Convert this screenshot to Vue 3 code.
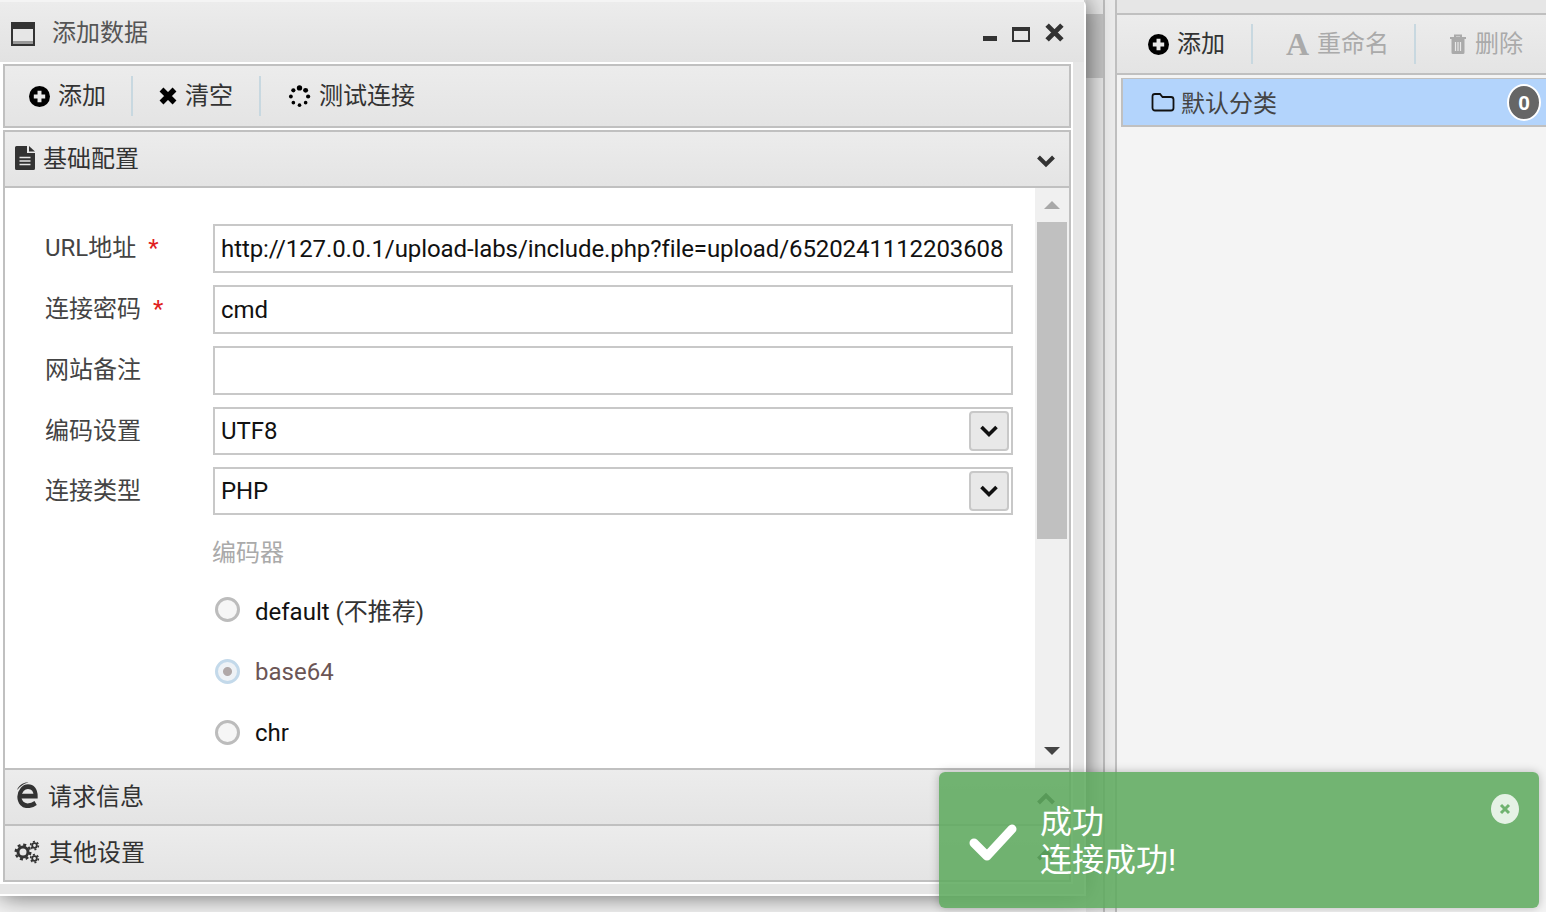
<script setup>
const fields = [
  { label: 'URL地址', required: true, value: 'http://127.0.0.1/upload-labs/include.php?file=upload/6520241112203608' },
  { label: '连接密码', required: true, value: 'cmd' },
  { label: '网站备注', value: '' },
  { label: '编码设置', value: 'UTF8', select: true },
  { label: '连接类型', value: 'PHP', select: true },
]
const encoders = [
  { name: 'default', note: ' (不推荐)' },
  { name: 'base64', checked: true },
  { name: 'chr' },
]
const spinnerDots = [
  [12, 3, 2.8], [18.4, 5.6, 2.6], [21, 12, 2.2], [18.4, 18.4, 1.9],
  [12, 21, 1.9], [5.6, 18.4, 1.9], [3, 12, 2], [5.6, 5.6, 2.2],
]
</script>

<template>
  <div class="desk">
    <div class="back-left">
      <div class="back-scroll"><div class="back-thumb"></div></div>
    </div>
    <div class="back-gap"></div>
    <div class="back-right">
      <div class="right-top"></div>
      <div class="right-bar">
        <div class="tool tool-first">
          <svg class="ic-plus" viewBox="0 0 24 24"><circle cx="12" cy="12" r="12" fill="#000" /><path d="M12 5.500v13M5.500 12h13" stroke="#e8e8e8" stroke-width="4.500" /></svg>
          <span class="tool-label">添加</span>
        </div>
        <div class="tool tool-off tool-rename">
          <span class="glyph-a">A</span>
          <span class="tool-label">重命名</span>
        </div>
        <div class="tool tool-off tool-del">
          <svg class="ic-trash" viewBox="0 0 18 22">
            <path d="M1 5h16M6 5V2.500h6V5" fill="none" stroke="#aaa" stroke-width="2" />
            <path d="M2.500 6h13v13.500a1.500 1.500 0 0 1-1.500 1.500H4a1.500 1.500 0 0 1-1.500-1.500z" fill="#aaa" />
            <path d="M6.500 9v9M9 9v9M11.500 9v9" stroke="#e8e8e8" stroke-width="1.200" />
          </svg>
          <span class="tool-label">删除</span>
        </div>
      </div>
      <div class="cat-item">
        <svg class="ic-folder" viewBox="0 0 24 20"><path d="M4 2h5l2.500 3H20a2.500 2.500 0 0 1 2.500 2.500V16a2.500 2.500 0 0 1-2.500 2.500H4A2.500 2.500 0 0 1 1.500 16V4.500A2.500 2.500 0 0 1 4 2z" fill="none" stroke="#111" stroke-width="1.800" /></svg>
        <span class="cat-name">默认分类</span>
        <span class="badge">0</span>
      </div>
    </div>

    <!-- 浮动窗口 -->
    <div class="win">
      <div class="win-head">
        <svg class="ic-win" viewBox="0 0 24 24">
          <rect x="0" y="0" width="24" height="24" fill="#333" />
          <rect x="2" y="7" width="20" height="15" fill="#e6e6e6" />
          <rect x="2" y="19" width="20" height="3" fill="#999" />
        </svg>
        <span class="win-title">添加数据</span>
        <div class="win-ctrl">
          <svg class="ic-min" viewBox="0 0 14 5"><rect width="14" height="5" fill="#333" /></svg>
          <svg class="ic-max" viewBox="0 0 18 15"><path d="M1 1h16v13H1z" fill="none" stroke="#333" stroke-width="2" /><path d="M1 2.500h16" stroke="#333" stroke-width="3" /></svg>
          <svg class="ic-close" viewBox="0 0 18 18"><path d="M2 2l14 14M16 2L2 16" stroke="#333" stroke-width="4.600" /></svg>
        </div>
      </div>

      <div class="win-body">
        <div class="toolbar">
          <div class="tool tool-first">
            <svg class="ic-plus" viewBox="0 0 24 24"><circle cx="12" cy="12" r="12" fill="#000" /><path d="M12 5.500v13M5.500 12h13" stroke="#e8e8e8" stroke-width="4.500" /></svg>
            <span class="tool-label">添加</span>
          </div>
          <div class="tool tool-clear">
            <svg class="ic-x" viewBox="0 0 18 18"><path d="M2.500 2.500l13 13M15.500 2.500l-13 13" stroke="#000" stroke-width="5.500" /></svg>
            <span class="tool-label">清空</span>
          </div>
          <div class="tool tool-test">
            <svg class="ic-spin" viewBox="0 0 24 24"><circle v-for="(d, i) in spinnerDots" :key="i" :cx="d[0]" :cy="d[1]" :r="d[2]" fill="#000" /></svg>
            <span class="tool-label">测试连接</span>
          </div>
        </div>

        <div class="acc">
          <div class="acc-head acc-first">
            <svg class="ic-file" viewBox="0 0 20 24">
              <path d="M0 1.500A1.500 1.500 0 0 1 1.500 0H12v7h8v15.500a1.500 1.500 0 0 1-1.500 1.500h-17A1.500 1.500 0 0 1 0 22.500z" fill="#333" />
              <path d="M14 0l6 5.500h-6z" fill="#333" />
              <path d="M4.500 11.500h11M4.500 15h11M4.500 18.500h11" stroke="#e8e8e8" stroke-width="1.600" />
            </svg>
            <span class="acc-title">基础配置</span>
            <svg class="chev" viewBox="0 0 20 14"><path d="M2.500 3l7.500 7.500L17.500 3" fill="none" stroke="#333" stroke-width="4" /></svg>
          </div>

          <div class="acc-main">
            <div class="form">
              <div v-for="f in fields" :key="f.label" class="row" :class="{ 'row-sel': f.select }">
                <label class="lab">{{ f.label }}<i v-if="f.required" class="req">*</i></label>
                <div class="inp">
                  <span class="val">{{ f.value }}</span>
                  <span v-if="f.select" class="sel-btn">
                    <svg viewBox="0 0 20 14"><path d="M2.500 3l7.500 7.500L17.500 3" fill="none" stroke="#111" stroke-width="3.600" /></svg>
                  </span>
                </div>
              </div>
              <div class="enc-title">编码器</div>
              <div v-for="e in encoders" :key="e.name" class="radio" :class="{ on: e.checked }">
                <span class="dot"></span>
                <span class="radio-name">{{ e.name }}<span class="radio-note">{{ e.note }}</span></span>
              </div>
            </div>
            <div class="vbar">
              <div class="arr arr-up"></div>
              <div class="thumb"></div>
              <div class="arr arr-down"></div>
            </div>
          </div>

          <div class="acc-head acc-req">
            <svg class="ic-edge" viewBox="0 0 24 24" preserveAspectRatio="none">
              <path d="M5 13.500H20.500C20.500 8 17.500 5 12.500 5C8 5 4 8.500 3.500 14C3.500 19 7.500 22 12 22C15 22 18 21.200 20.500 19.500" fill="none" stroke="#333" stroke-width="4.200" />
              <path d="M1 8C4 2.500 9 1 13 1.500C8 2 5 4.500 1 8z" fill="#333" />
            </svg>
            <span class="acc-title">请求信息</span>
            <svg class="chev" viewBox="0 0 20 14"><path d="M2.500 11L10 3.500 17.500 11" fill="none" stroke="#333" stroke-width="4" /></svg>
          </div>
          <div class="acc-head acc-other">
            <svg class="ic-gears" viewBox="0 0 26 24">
              <circle cx="9" cy="12" r="5" fill="none" stroke="#333" stroke-width="3" />
              <circle cx="9" cy="12" r="7.300" fill="none" stroke="#333" stroke-width="2.400" stroke-dasharray="3 2.730" />
              <circle cx="20.500" cy="5.500" r="2.300" fill="none" stroke="#333" stroke-width="1.800" />
              <circle cx="20.500" cy="5.500" r="3.900" fill="none" stroke="#333" stroke-width="1.600" stroke-dasharray="2 2.080" />
              <circle cx="20.500" cy="18.500" r="2.300" fill="none" stroke="#333" stroke-width="1.800" />
              <circle cx="20.500" cy="18.500" r="3.900" fill="none" stroke="#333" stroke-width="1.600" stroke-dasharray="2 2.080" />
            </svg>
            <span class="acc-title">其他设置</span>
            <svg class="chev" viewBox="0 0 20 14"><path d="M2.500 11L10 3.500 17.500 11" fill="none" stroke="#333" stroke-width="4" /></svg>
          </div>
        </div>
      </div>
    </div>

    <!-- 提示 -->
    <div class="toast">
      <svg class="ic-check" viewBox="0 0 50 40"><path d="M6 20l13 13L44 6" fill="none" stroke="#fff" stroke-width="9" stroke-linejoin="round" stroke-linecap="round" /></svg>
      <div class="toast-text">
        <div>成功</div>
        <div>连接成功!</div>
      </div>
      <span class="toast-close">
        <svg viewBox="0 0 12 12"><path d="M2 2l8 8M10 2l-8 8" stroke="#70b370" stroke-width="3" /></svg>
      </span>
    </div>
  </div>
</template>

<style scoped>
.desk {
  position: relative;
  display: flex;
  width: 1546px;
  height: 912px;
  overflow: hidden;
  background: #f4f4f4;
  font-family: Roboto, "Noto Sans CJK SC", sans-serif;
  font-size: 24px;
  color: #333;
}

/* 背后的面板 */
.back-left {
  flex: 0 0 1105px;
  display: flex;
  justify-content: flex-end;
  border-right: 2px solid #bdbdbd;
  box-sizing: border-box;
  background: #f4f4f4;
}
.back-scroll {
  width: 17px;
  background: #e8e8e8;
}
.back-thumb {
  height: 64px;
  margin-top: 14px;
  background: #c4c4c4;
}
.back-gap {
  flex: 0 0 10px;
  background: #ebebeb;
}
.back-right {
  flex: 1;
  min-width: 0;
  border-left: 2px solid #c0c0c0;
  display: flex;
  flex-direction: column;
}
.right-top {
  height: 13px;
  background: #e6e6e6;
  border-bottom: 2px solid #c0c0c0;
}
.right-bar {
  height: 58px;
  display: flex;
  align-items: center;
  background: linear-gradient(#ececec, #e4e4e4);
  border-bottom: 2px solid #c0c0c0;
}
.tool {
  display: flex;
  align-items: center;
  gap: 8px;
  height: 40px;
  white-space: nowrap;
}
.tool + .tool {
  border-left: 2px solid #c8d8e0;
}
.tool-label {
  padding-bottom: 6px;
}
.right-bar .tool-first {
  width: 103px;
  padding-left: 31px;
  box-sizing: content-box;
}
.tool-off {
  color: #aaa;
}
.tool-rename {
  width: 128px;
  padding-left: 33px;
}
.tool-del {
  padding-left: 33px;
}
.glyph-a {
  font-family: "Liberation Serif", serif;
  font-weight: 700;
  font-size: 32px;
  line-height: 1;
  color: #aaa;
}
.ic-plus {
  width: 21px;
  height: 21px;
}
.ic-trash {
  width: 18px;
  height: 22px;
}
.cat-item {
  display: flex;
  align-items: center;
  height: 46px;
  margin: 3px 0 0 4px;
  padding-left: 28px;
  background: #b3d4fc;
  border: 2px solid #c0c0c0;
  border-width: 1px 0 2px 2px;
  color: #444;
  position: relative;
}
.cat-name {
  padding-bottom: 2px;
}
.ic-folder {
  width: 24px;
  height: 20px;
  margin-right: 6px;
}
.badge {
  position: absolute;
  right: 5px;
  top: 5px;
  width: 30px;
  height: 33px;
  border: 2px solid #fff;
  border-radius: 50%;
  background: #666;
  color: #fff;
  font: 700 21px/33px "Liberation Sans", sans-serif;
  text-align: center;
}

/* 窗口 */
.win {
  position: absolute;
  left: 0;
  top: 0;
  width: 1086px;
  height: 896px;
  box-sizing: border-box;
  padding-top: 2px;
  background: #e6e6e6;
  border-top-right-radius: 6px;
  border-right: 2px solid #fff;
  border-bottom: 2px solid #fff;
  box-shadow: 0 0 26px rgba(0, 0, 0, .6);
  display: flex;
  flex-direction: column;
}
.win::before {
  content: "";
  position: absolute;
  left: 0;
  right: 0;
  top: 0;
  height: 2px;
  background: #f4f4f4;
}
.win-head {
  flex: 0 0 60px;
  display: flex;
  align-items: center;
  padding-left: 11px;
  background: linear-gradient(#ececec, #e2e2e2);
}
.ic-win {
  width: 24px;
  height: 24px;
  margin-right: 17px;
  margin-top: 3px;
}
.win-title {
  padding-bottom: 4px;
  color: #555;
}
.win-ctrl {
  margin-left: auto;
  display: flex;
  align-items: flex-start;
  padding-right: 20px;
  height: 20px;
  gap: 15px;
}
.ic-min {
  width: 14px;
  height: 5px;
  margin-top: 14px;
}
.ic-max {
  width: 18px;
  height: 15px;
  margin-top: 5px;
}
.ic-close {
  width: 19px;
  height: 19px;
  margin-top: 1px;
}
.win-body {
  width: 1073px;
  height: 822px;
  box-sizing: border-box;
  padding: 2px 2px 2px 3px;
  background: #fff;
  display: flex;
  flex-direction: column;
  gap: 2px;
}
.toolbar {
  flex: 0 0 64px;
  box-sizing: border-box;
  display: flex;
  align-items: center;
  border: 2px solid #c0c0c0;
  background: linear-gradient(#ececec, #e4e4e4);
}
.toolbar .tool-first {
  width: 102px;
  padding-left: 24px;
}
.tool-clear {
  width: 128px;
  padding-left: 26px;
  box-sizing: border-box;
}
.tool-test {
  padding-left: 27px;
}
.ic-x {
  width: 18px;
  height: 18px;
}
.ic-spin {
  width: 23px;
  height: 23px;
}
.acc {
  flex: 1;
  min-height: 0;
  display: flex;
  flex-direction: column;
  border: 2px solid #c0c0c0;
}
.acc-head {
  flex: 0 0 56px;
  box-sizing: border-box;
  display: flex;
  align-items: center;
  background: linear-gradient(#ececec, #e4e4e4);
  padding-right: 13px;
}
.acc-first {
  padding-left: 10px;
  border-bottom: 2px solid #c0c0c0;
}
.acc-req {
  padding-left: 11px;
  border-top: 2px solid #c0c0c0;
}
.acc-other {
  padding-left: 9px;
  border-top: 2px solid #c0c0c0;
}
.acc-title {
  margin-left: 8px;
  padding-bottom: 6px;
}
.acc-req .acc-title {
  margin-left: 9px;
}
.acc-other .acc-title {
  margin-left: 9px;
}
.ic-file {
  width: 20px;
  height: 24px;
  margin-bottom: 3px;
}
.ic-edge {
  width: 23px;
  height: 27px;
  margin-bottom: 5px;
}
.ic-gears {
  width: 26px;
  height: 24px;
  margin-bottom: 2px;
}
.chev {
  margin-left: auto;
  width: 20px;
  height: 14px;
  margin-top: 3px;
}
.acc-main {
  flex: 1;
  min-height: 0;
  display: flex;
  background: #fff;
}
.form {
  flex: 1;
  min-width: 0;
  padding: 36px 22px 0 40px;
  overflow: hidden;
}
.row {
  display: flex;
  align-items: center;
  margin-bottom: 12px;
}
.lab {
  flex: 0 0 168px;
  margin-top: -6px;
  white-space: nowrap;
  color: #444;
}
.req {
  margin-left: 12px;
  color: #e02020;
  font-style: normal;
}
.inp {
  flex: 1;
  height: 49px;
  box-sizing: border-box;
  display: flex;
  align-items: center;
  justify-content: space-between;
  padding: 0 2px 0 6px;
  border: 2px solid #c8c8c8;
  color: #111;
  white-space: nowrap;
}
.val {
  letter-spacing: -.09px;
}
.row-sel .inp {
  height: 48px;
}
.sel-btn {
  display: flex;
  align-items: center;
  justify-content: center;
  width: 40px;
  height: 40px;
  box-sizing: border-box;
  border: 2px solid #c8c8c8;
  border-radius: 4px;
  background: #e8e8e8;
}
.sel-btn svg {
  width: 20px;
  height: 14px;
}
.enc-title {
  margin: 19px 0 0 167px;
  height: 45px;
  line-height: 38px;
  color: #aaa;
}
.radio {
  display: flex;
  align-items: center;
  height: 61px;
  margin-left: 170px;
  color: #111;
}
.radio + .radio {
  padding-top: 1px;
  margin-bottom: -1px;
}
.dot {
  width: 25px;
  height: 25px;
  box-sizing: border-box;
  border: 3px solid #bcbcbc;
  border-radius: 50%;
  background: #f6f6f6;
  margin-right: 15px;
}
.radio.on .dot {
  border-color: #c3d9ea;
  background: radial-gradient(circle, #b0a8a8 0 4px, #eef2f6 5px);
}
.radio.on .radio-name {
  color: #6b5555;
}
.radio-note {
  color: #333;
}
.vbar {
  flex: 0 0 34px;
  display: flex;
  flex-direction: column;
  align-items: center;
  background: #f0f0f0;
}
.arr {
  width: 0;
  height: 0;
  border-left: 8px solid transparent;
  border-right: 8px solid transparent;
}
.arr-up {
  margin-top: 13px;
  border-bottom: 8px solid #a8a8a8;
}
.thumb {
  width: 30px;
  height: 317px;
  margin-top: 13px;
  background: #c0c0c0;
}
.arr-down {
  margin-top: auto;
  margin-bottom: 13px;
  border-top: 8px solid #444;
}

/* 提示框 */
.toast {
  position: absolute;
  left: 939px;
  top: 772px;
  width: 600px;
  height: 136px;
  display: flex;
  align-items: center;
  border-radius: 6px;
  background: rgba(94, 170, 94, .87);
  box-shadow: 0 0 10px rgba(0, 0, 0, .25);
  color: #fff;
  font-size: 32px;
}
.ic-check {
  width: 50px;
  height: 40px;
  margin-left: 29px;
  margin-top: 5px;
}
.toast-text {
  margin-left: 22px;
  margin-top: 2px;
  line-height: 38px;
}
.toast-close {
  position: absolute;
  top: 22px;
  right: 20px;
  width: 28px;
  height: 30px;
  display: flex;
  align-items: center;
  justify-content: center;
  border-radius: 50%;
  background: rgba(255, 255, 255, .82);
}
.toast-close svg {
  width: 12px;
  height: 12px;
}
</style>
